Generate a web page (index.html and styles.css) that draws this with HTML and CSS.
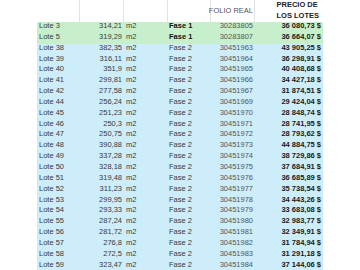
FILE: index.html
```html
<!DOCTYPE html>
<html lang="es">
<head>
    <meta charset="UTF-8">
    <title>Lotes</title>
    <link rel="stylesheet" href="styles.css">
</head>
<body>
    <div class="sheet">
        <div class="row head">
            <div class="cell"></div>
            <div class="cell"></div>
            <div class="cell"></div>
            <div class="cell"></div>
            <div class="cell folio-head">FOLIO REAL</div>
            <div class="cell price-head">PRECIO DE<br>LOS LOTES</div>
        </div>
        <div class="row fase1"><div class="cell">Lote 3</div><div class="cell num">314,21</div><div class="cell">m2</div><div class="cell fase">Fase 1</div><div class="cell folio">30283805</div><div class="cell price">36 080,73 $</div></div>
        <div class="row fase1"><div class="cell">Lote 5</div><div class="cell num">319,29</div><div class="cell">m2</div><div class="cell fase">Fase 1</div><div class="cell folio">30283807</div><div class="cell price">36 664,07 $</div></div>
        <div class="row"><div class="cell">Lote 38</div><div class="cell num">382,35</div><div class="cell">m2</div><div class="cell fase">Fase 2</div><div class="cell folio">30451963</div><div class="cell price">43 905,25 $</div></div>
        <div class="row"><div class="cell">Lote 39</div><div class="cell num">316,11</div><div class="cell">m2</div><div class="cell fase">Fase 2</div><div class="cell folio">30451964</div><div class="cell price">36 298,91 $</div></div>
        <div class="row"><div class="cell">Lote 40</div><div class="cell num">351,9</div><div class="cell">m2</div><div class="cell fase">Fase 2</div><div class="cell folio">30451965</div><div class="cell price">40 408,68 $</div></div>
        <div class="row"><div class="cell">Lote 41</div><div class="cell num">299,81</div><div class="cell">m2</div><div class="cell fase">Fase 2</div><div class="cell folio">30451966</div><div class="cell price">34 427,18 $</div></div>
        <div class="row"><div class="cell">Lote 42</div><div class="cell num">277,58</div><div class="cell">m2</div><div class="cell fase">Fase 2</div><div class="cell folio">30451967</div><div class="cell price">31 874,51 $</div></div>
        <div class="row"><div class="cell">Lote 44</div><div class="cell num">256,24</div><div class="cell">m2</div><div class="cell fase">Fase 2</div><div class="cell folio">30451969</div><div class="cell price">29 424,04 $</div></div>
        <div class="row"><div class="cell">Lote 45</div><div class="cell num">251,23</div><div class="cell">m2</div><div class="cell fase">Fase 2</div><div class="cell folio">30451970</div><div class="cell price">28 848,74 $</div></div>
        <div class="row"><div class="cell">Lote 46</div><div class="cell num">250,3</div><div class="cell">m2</div><div class="cell fase">Fase 2</div><div class="cell folio">30451971</div><div class="cell price">28 741,95 $</div></div>
        <div class="row"><div class="cell">Lote 47</div><div class="cell num">250,75</div><div class="cell">m2</div><div class="cell fase">Fase 2</div><div class="cell folio">30451972</div><div class="cell price">28 793,62 $</div></div>
        <div class="row"><div class="cell">Lote 48</div><div class="cell num">390,88</div><div class="cell">m2</div><div class="cell fase">Fase 2</div><div class="cell folio">30451973</div><div class="cell price">44 884,75 $</div></div>
        <div class="row"><div class="cell">Lote 49</div><div class="cell num">337,28</div><div class="cell">m2</div><div class="cell fase">Fase 2</div><div class="cell folio">30451974</div><div class="cell price">38 729,86 $</div></div>
        <div class="row"><div class="cell">Lote 50</div><div class="cell num">328,18</div><div class="cell">m2</div><div class="cell fase">Fase 2</div><div class="cell folio">30451975</div><div class="cell price">37 684,91 $</div></div>
        <div class="row"><div class="cell">Lote 51</div><div class="cell num">319,48</div><div class="cell">m2</div><div class="cell fase">Fase 2</div><div class="cell folio">30451976</div><div class="cell price">36 685,89 $</div></div>
        <div class="row"><div class="cell">Lote 52</div><div class="cell num">311,23</div><div class="cell">m2</div><div class="cell fase">Fase 2</div><div class="cell folio">30451977</div><div class="cell price">35 738,54 $</div></div>
        <div class="row"><div class="cell">Lote 53</div><div class="cell num">299,95</div><div class="cell">m2</div><div class="cell fase">Fase 2</div><div class="cell folio">30451978</div><div class="cell price">34 443,26 $</div></div>
        <div class="row"><div class="cell">Lote 54</div><div class="cell num">293,33</div><div class="cell">m2</div><div class="cell fase">Fase 2</div><div class="cell folio">30451979</div><div class="cell price">33 683,08 $</div></div>
        <div class="row"><div class="cell">Lote 55</div><div class="cell num">287,24</div><div class="cell">m2</div><div class="cell fase">Fase 2</div><div class="cell folio">30451980</div><div class="cell price">32 983,77 $</div></div>
        <div class="row"><div class="cell">Lote 56</div><div class="cell num">281,72</div><div class="cell">m2</div><div class="cell fase">Fase 2</div><div class="cell folio">30451981</div><div class="cell price">32 349,91 $</div></div>
        <div class="row"><div class="cell">Lote 57</div><div class="cell num">276,8</div><div class="cell">m2</div><div class="cell fase">Fase 2</div><div class="cell folio">30451982</div><div class="cell price">31 784,94 $</div></div>
        <div class="row"><div class="cell">Lote 58</div><div class="cell num">272,5</div><div class="cell">m2</div><div class="cell fase">Fase 2</div><div class="cell folio">30451983</div><div class="cell price">31 291,18 $</div></div>
        <div class="row"><div class="cell">Lote 59</div><div class="cell num">323,47</div><div class="cell">m2</div><div class="cell fase">Fase 2</div><div class="cell folio">30451984</div><div class="cell price">37 144,06 $</div></div>
    </div>
</body>
</html>
```

FILE: styles.css
```css
body {
    margin: 0;
    background: #fff;
    font-family: 'Liberation Sans', Arial, sans-serif;
    font-size: 7.5px;
    color: #3a3a3a;
}
.sheet {
    margin-left: 37px;
    width: 286px;
}
.row {
    display: grid;
    grid-template-columns: 43px 44px 44px 43px 44px 68px;
    height: 10.85px;
    background-color: #cdedfa;
}
.row.fase1 {
    background-color: #c8efcb;
}
.row.head {
    height: 22px;
    background-color: #fff;
}
.cell {
    padding: 0 2px;
    line-height: 8.4px;
    white-space: nowrap;
    align-self: start;
}
.head .cell {
    height: 22px;
    box-sizing: border-box;
    border-right: 1px solid #e2e2e2;
    display: flex;
    flex-direction: column;
    justify-content: center;
    align-items: flex-end;
    line-height: 10.6px;
}
.head .cell:last-child {
    border-right: none;
}
.folio-head {
    color: #555;
    padding-right: 1px;
}
.price-head {
    font-weight: bold;
    color: #222;
    padding-right: 4px;
}
.num {
    text-align: right;
}
.fase {
    padding-left: 1px;
}
.fase1 .fase {
    font-weight: bold;
    color: #111;
}
.folio {
    text-align: right;
    color: #555;
}
.price {
    text-align: right;
    font-weight: bold;
    color: #1a1a1a;
}
```
